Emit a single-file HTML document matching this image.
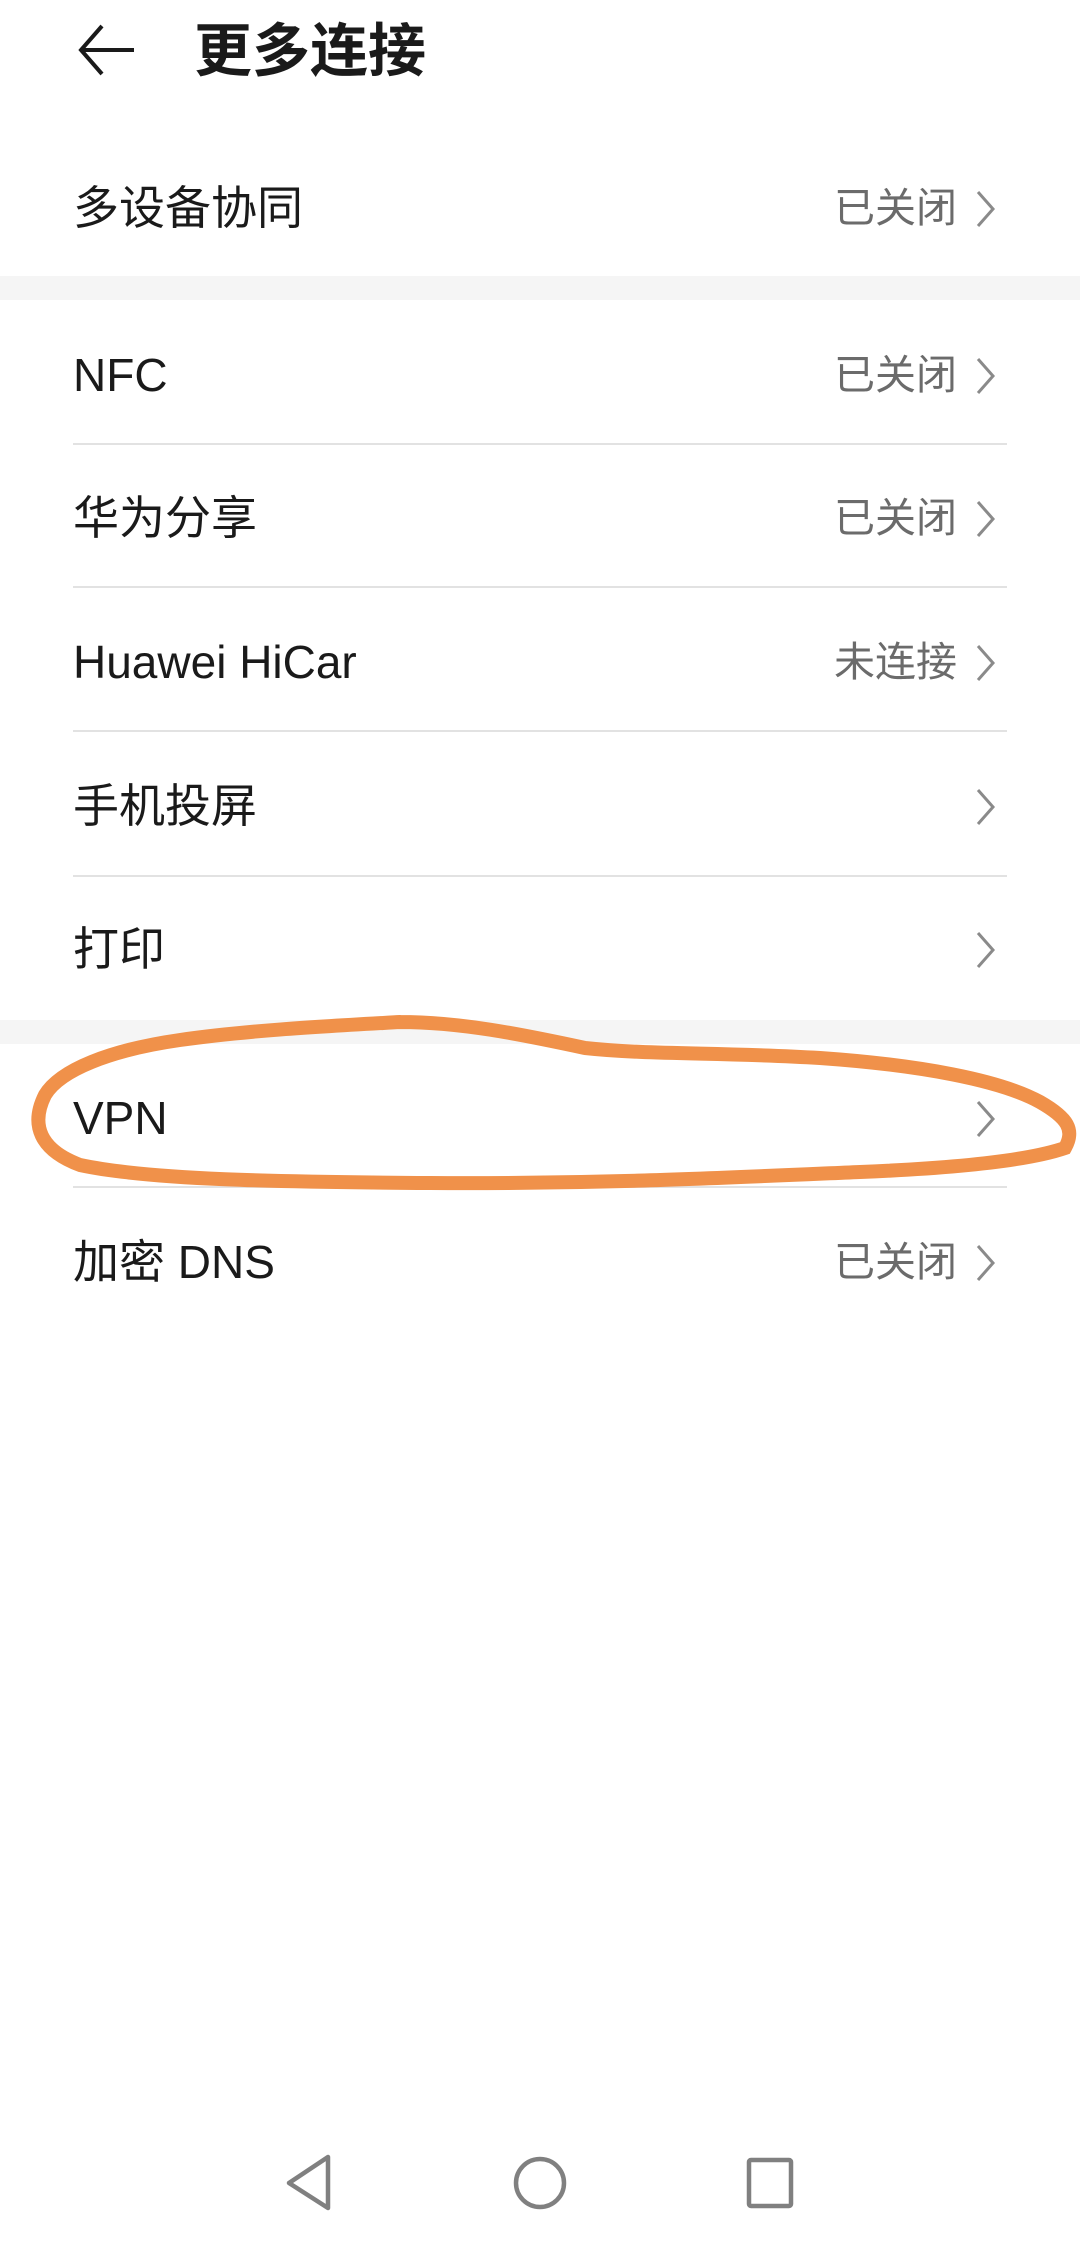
<!DOCTYPE html>
<html><head><meta charset="utf-8"><style>
*{margin:0;padding:0;box-sizing:border-box}
body{width:1080px;height:2241px;background:#fff;position:relative;overflow:hidden;font-family:"Liberation Sans","Noto Sans CJK SC",sans-serif;color:#1a1a1a}
.t{position:absolute;left:194px;top:20px;font-size:58px;font-weight:bold;line-height:64px}
.band{position:absolute;left:0;width:1080px;background:#f5f5f5}
.row{position:absolute;left:73px;width:934px;height:64px;line-height:64px;font-size:46px}
.row .r{position:absolute;right:50px;top:0;font-size:41px;color:#6b6b6b}
.row svg{position:absolute;right:10px;top:14px}
.div{position:absolute;left:73px;width:934px;height:2px;background:#e2e2e2}
</style></head><body>
<svg style="position:absolute;left:76px;top:22px" width="62" height="56" viewBox="0 0 62 56"><path d="M26 4 L5 28 L26 52 M5 28 H58" fill="none" stroke="#1a1a1a" stroke-width="4"/></svg>
<div class="t">更多连接</div>
<div class="row" style="top:176px">多设备协同<span class="r">已关闭</span><svg width="22" height="38" viewBox="0 0 22 38"><path d="M3 2 L18 19 L3 36" fill="none" stroke="#8a8a8a" stroke-width="3"/></svg></div>
<div class="band" style="top:276px;height:24px"></div>
<div class="row" style="top:343px">NFC<span class="r">已关闭</span><svg width="22" height="38" viewBox="0 0 22 38"><path d="M3 2 L18 19 L3 36" fill="none" stroke="#8a8a8a" stroke-width="3"/></svg></div>
<div class="div" style="top:443px"></div>
<div class="row" style="top:486px">华为分享<span class="r">已关闭</span><svg width="22" height="38" viewBox="0 0 22 38"><path d="M3 2 L18 19 L3 36" fill="none" stroke="#8a8a8a" stroke-width="3"/></svg></div>
<div class="div" style="top:586px"></div>
<div class="row" style="top:630px">Huawei HiCar<span class="r">未连接</span><svg width="22" height="38" viewBox="0 0 22 38"><path d="M3 2 L18 19 L3 36" fill="none" stroke="#8a8a8a" stroke-width="3"/></svg></div>
<div class="div" style="top:730px"></div>
<div class="row" style="top:774px">手机投屏<svg width="22" height="38" viewBox="0 0 22 38"><path d="M3 2 L18 19 L3 36" fill="none" stroke="#8a8a8a" stroke-width="3"/></svg></div>
<div class="div" style="top:875px"></div>
<div class="row" style="top:917px">打印<svg width="22" height="38" viewBox="0 0 22 38"><path d="M3 2 L18 19 L3 36" fill="none" stroke="#8a8a8a" stroke-width="3"/></svg></div>
<div class="band" style="top:1020px;height:24px"></div>
<div class="row" style="top:1086px">VPN<svg width="22" height="38" viewBox="0 0 22 38"><path d="M3 2 L18 19 L3 36" fill="none" stroke="#8a8a8a" stroke-width="3"/></svg></div>
<div class="div" style="top:1186px"></div>
<div class="row" style="top:1230px">加密 DNS<span class="r">已关闭</span><svg width="22" height="38" viewBox="0 0 22 38"><path d="M3 2 L18 19 L3 36" fill="none" stroke="#8a8a8a" stroke-width="3"/></svg></div>
<svg style="position:absolute;left:0;top:0" width="1080" height="1300" viewBox="0 0 1080 1300">
<path d="M400 1022 C330 1026,250 1030,180 1040 C110 1050,60 1070,45 1095 C30 1125,40 1150,80 1165 C150 1180,280 1182,430 1183 C600 1184,720 1178,860 1172 C960 1168,1030 1160,1065 1148 C1075 1130,1068 1118,1040 1102 C1000 1080,920 1065,820 1058 C720 1052,650 1055,585 1048 C520 1034,460 1022,400 1022" fill="none" stroke="#f0914a" stroke-width="14" stroke-linecap="round"/>
</svg>
<svg style="position:absolute;left:0;top:2140px" width="1080" height="101" viewBox="0 2140 1080 101">
<path d="M328 2157 L328 2208 L289 2183 Z" fill="none" stroke="#808080" stroke-width="4.5" stroke-linejoin="round"/>
<circle cx="540" cy="2183" r="24" fill="none" stroke="#808080" stroke-width="4.5"/>
<rect x="749" y="2160" width="42" height="46" rx="2" fill="none" stroke="#808080" stroke-width="4.5"/>
</svg>
</body></html>
